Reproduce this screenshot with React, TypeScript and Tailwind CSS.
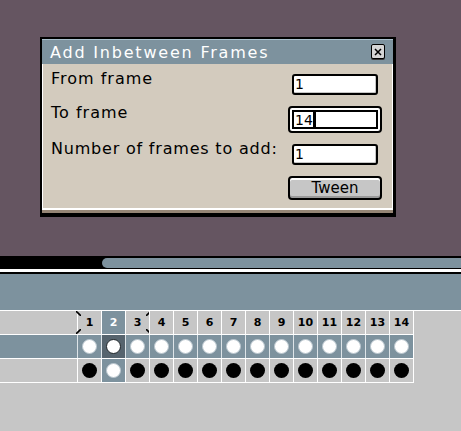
import React from 'react';

const frames = Array.from({ length: 14 }, (_, i) => i + 1);

const font = "font-['DejaVu_Sans',sans-serif]";

const CloseButton: React.FC = () => (
    <div className="mt-[4px] flex h-[15px] w-[14px] items-center justify-center rounded-[2px] border border-black bg-[#d6d6d6] shadow-[0_1px_0_#3b3b3b]">
        <svg width="8" height="8" viewBox="0 0 8 8">
            <path d="M1 1 L7 7 M7 1 L1 7" stroke="#000" strokeWidth="1.5" />
        </svg>
    </div>
);

const Corner: React.FC<{ pos: 'tl' | 'bl' | 'tr' | 'br' }> = ({ pos }) => {
    const place = {
        tl: 'top-0 -left-[2px]',
        bl: 'bottom-0 -left-[2px]',
        tr: 'top-0 -right-[2px]',
        br: 'bottom-0 -right-[2px]',
    }[pos];
    const d = {
        tl: 'M0 0 L5 5',
        bl: 'M0 5 L5 0',
        tr: 'M5 0 L0 5',
        br: 'M5 5 L0 0',
    }[pos];
    return (
        <svg className={`absolute ${place}`} width="5" height="5" viewBox="0 0 5 5">
            <path d={d} stroke="#000" strokeWidth="1.6" />
        </svg>
    );
};

const Dialog: React.FC = () => (
    <div className={`w-[356px] border-t-2 border-r-[3px] border-b-4 border-l-2 border-black bg-[#968676] ${font}`}>
        {/* Title */}
        <div className="flex h-[25px] items-start justify-between border-t border-[#a9c0cc] bg-[#7d929e] pr-[8px] pl-[8px]">
            <span className="mt-[3px] text-[16px] leading-[20px] tracking-[1.8px] text-white">Add Inbetween Frames</span>
            <CloseButton />
        </div>

        {/* Body */}
        <div className="border-x border-b-2 border-white bg-[#d3cbbe] pt-[5px] pr-[10px] pb-[8px] pl-[8px] text-black">
            <div className="flex h-[34px] items-start justify-between">
                <span className="text-[16px] leading-[20px] tracking-[1px]">From frame</span>
                <div className="w-[94px] pt-[5px]">
                    <div className="ml-[4px] flex h-[21px] w-[86px] items-center rounded-[3px] border-2 border-black bg-white pl-[1px] text-[14px] leading-[17px] shadow-[inset_-1px_-1px_0_#c6c6c6]">1</div>
                </div>
            </div>

            <div className="flex h-[36px] items-start justify-between">
                <span className="text-[16px] leading-[20px] tracking-[1px]">To frame</span>
                <div className="mt-[3px] h-[27px] w-[94px] rounded-[4px] border-2 border-black bg-white p-[2px]">
                    <div className="flex h-full border-2 border-black bg-white">
                        <span className="pl-[1px] text-[14px] leading-[17px]">14</span>
                        <span className="w-[3px] bg-black" />
                    </div>
                </div>
            </div>

            <div className="flex h-[37px] items-start justify-between">
                <span className="text-[16px] leading-[20px] tracking-[0.8px]">Number of frames to add:</span>
                <div className="w-[94px] pt-[5px]">
                    <div className="ml-[4px] flex h-[21px] w-[86px] items-center rounded-[3px] border-2 border-black bg-white pl-[1px] text-[14px] leading-[17px] shadow-[inset_-1px_-1px_0_#c6c6c6]">1</div>
                </div>
            </div>

            <div className="flex justify-end">
                <button className="flex h-[24px] w-[94px] items-center justify-center rounded-[4px] border-2 border-black bg-[#c6c6c6] text-[15px] leading-[18px] shadow-[inset_0_2px_0_#ffffff,inset_0_-2px_0_#9a9a9a]">
                    Tween
                </button>
            </div>
        </div>
        <div className="h-[3px] bg-[#968676]" />
    </div>
);

const Timeline: React.FC = () => (
    <div className={`flex flex-1 flex-col bg-[#c6c6c6] ${font}`}>
        {/* scroll bar */}
        <div className="h-[13px] bg-black pt-[2px] pl-[102px]">
            <div className="h-[10px] rounded-l-[5px] bg-[#7d929e]" />
        </div>
        <div className="h-[3px] bg-white" />
        <div className="h-[2px] bg-black" />
        <div className="h-[36px] bg-[#7d929e]" />
        <div className="h-px bg-white" />

        <div className="flex">
            <div className="flex w-[414px] flex-col">
                {/* frame numbers */}
                <div className="flex h-[23px]">
                    <div className="w-[77px] bg-[#c6c6c6]" />
                    {frames.map((f) => (
                        <div
                            key={f}
                            className={`relative flex w-[24px] items-center justify-center border-l border-white text-[11px] leading-none font-bold ${f === 2 ? 'bg-[#7d929e] text-white' : 'bg-[#c6c6c6] text-black'}`}
                        >
                            {f}
                            {f === 1 && (
                                <>
                                    <Corner pos="tl" />
                                    <Corner pos="bl" />
                                </>
                            )}
                            {f === 3 && (
                                <>
                                    <Corner pos="tr" />
                                    <Corner pos="br" />
                                </>
                            )}
                        </div>
                    ))}
                    <div className="w-px bg-white" />
                </div>
                <div className="h-px bg-white" />

                {/* active layer */}
                <div className="flex h-[23px]">
                    <div className="w-[77px] bg-[#7d929e]" />
                    {frames.map((f) => (
                        <div
                            key={f}
                            className={`flex w-[24px] items-center justify-center border-l border-[#dde4e8] ${f === 2 ? 'bg-[#56646e]' : 'bg-[#7d929e]'}`}
                        >
                            <span className={`h-[15px] w-[15px] rounded-full bg-white ${f === 2 ? 'border border-[#1e2428]' : 'border border-[#b9c6ce]'}`} />
                        </div>
                    ))}
                    <div className="w-px bg-white" />
                </div>
                <div className="h-px bg-white" />

                {/* second layer */}
                <div className="flex h-[23px]">
                    <div className="w-[77px] bg-[#c6c6c6]" />
                    {frames.map((f) => (
                        <div
                            key={f}
                            className={`flex w-[24px] items-center justify-center border-l border-white ${f === 2 ? 'bg-[#7d929e]' : 'bg-[#c6c6c6]'}`}
                        >
                            <span className={`h-[15px] w-[15px] rounded-full ${f === 2 ? 'border border-[#b9c6ce] bg-white' : 'bg-black'}`} />
                        </div>
                    ))}
                    <div className="w-px bg-white" />
                </div>
                <div className="h-px bg-white" />
            </div>
            <div className="flex-1" />
        </div>
    </div>
);

const App: React.FC = () => {
    return (
        <div className="flex h-[431px] w-[461px] flex-col overflow-hidden bg-[#c6c6c6]">
            <div className="h-[256px] shrink-0 bg-[#655561] pt-[37px] pl-[40px]">
                <Dialog />
            </div>
            <Timeline />
        </div>
    );
};

export default App;
